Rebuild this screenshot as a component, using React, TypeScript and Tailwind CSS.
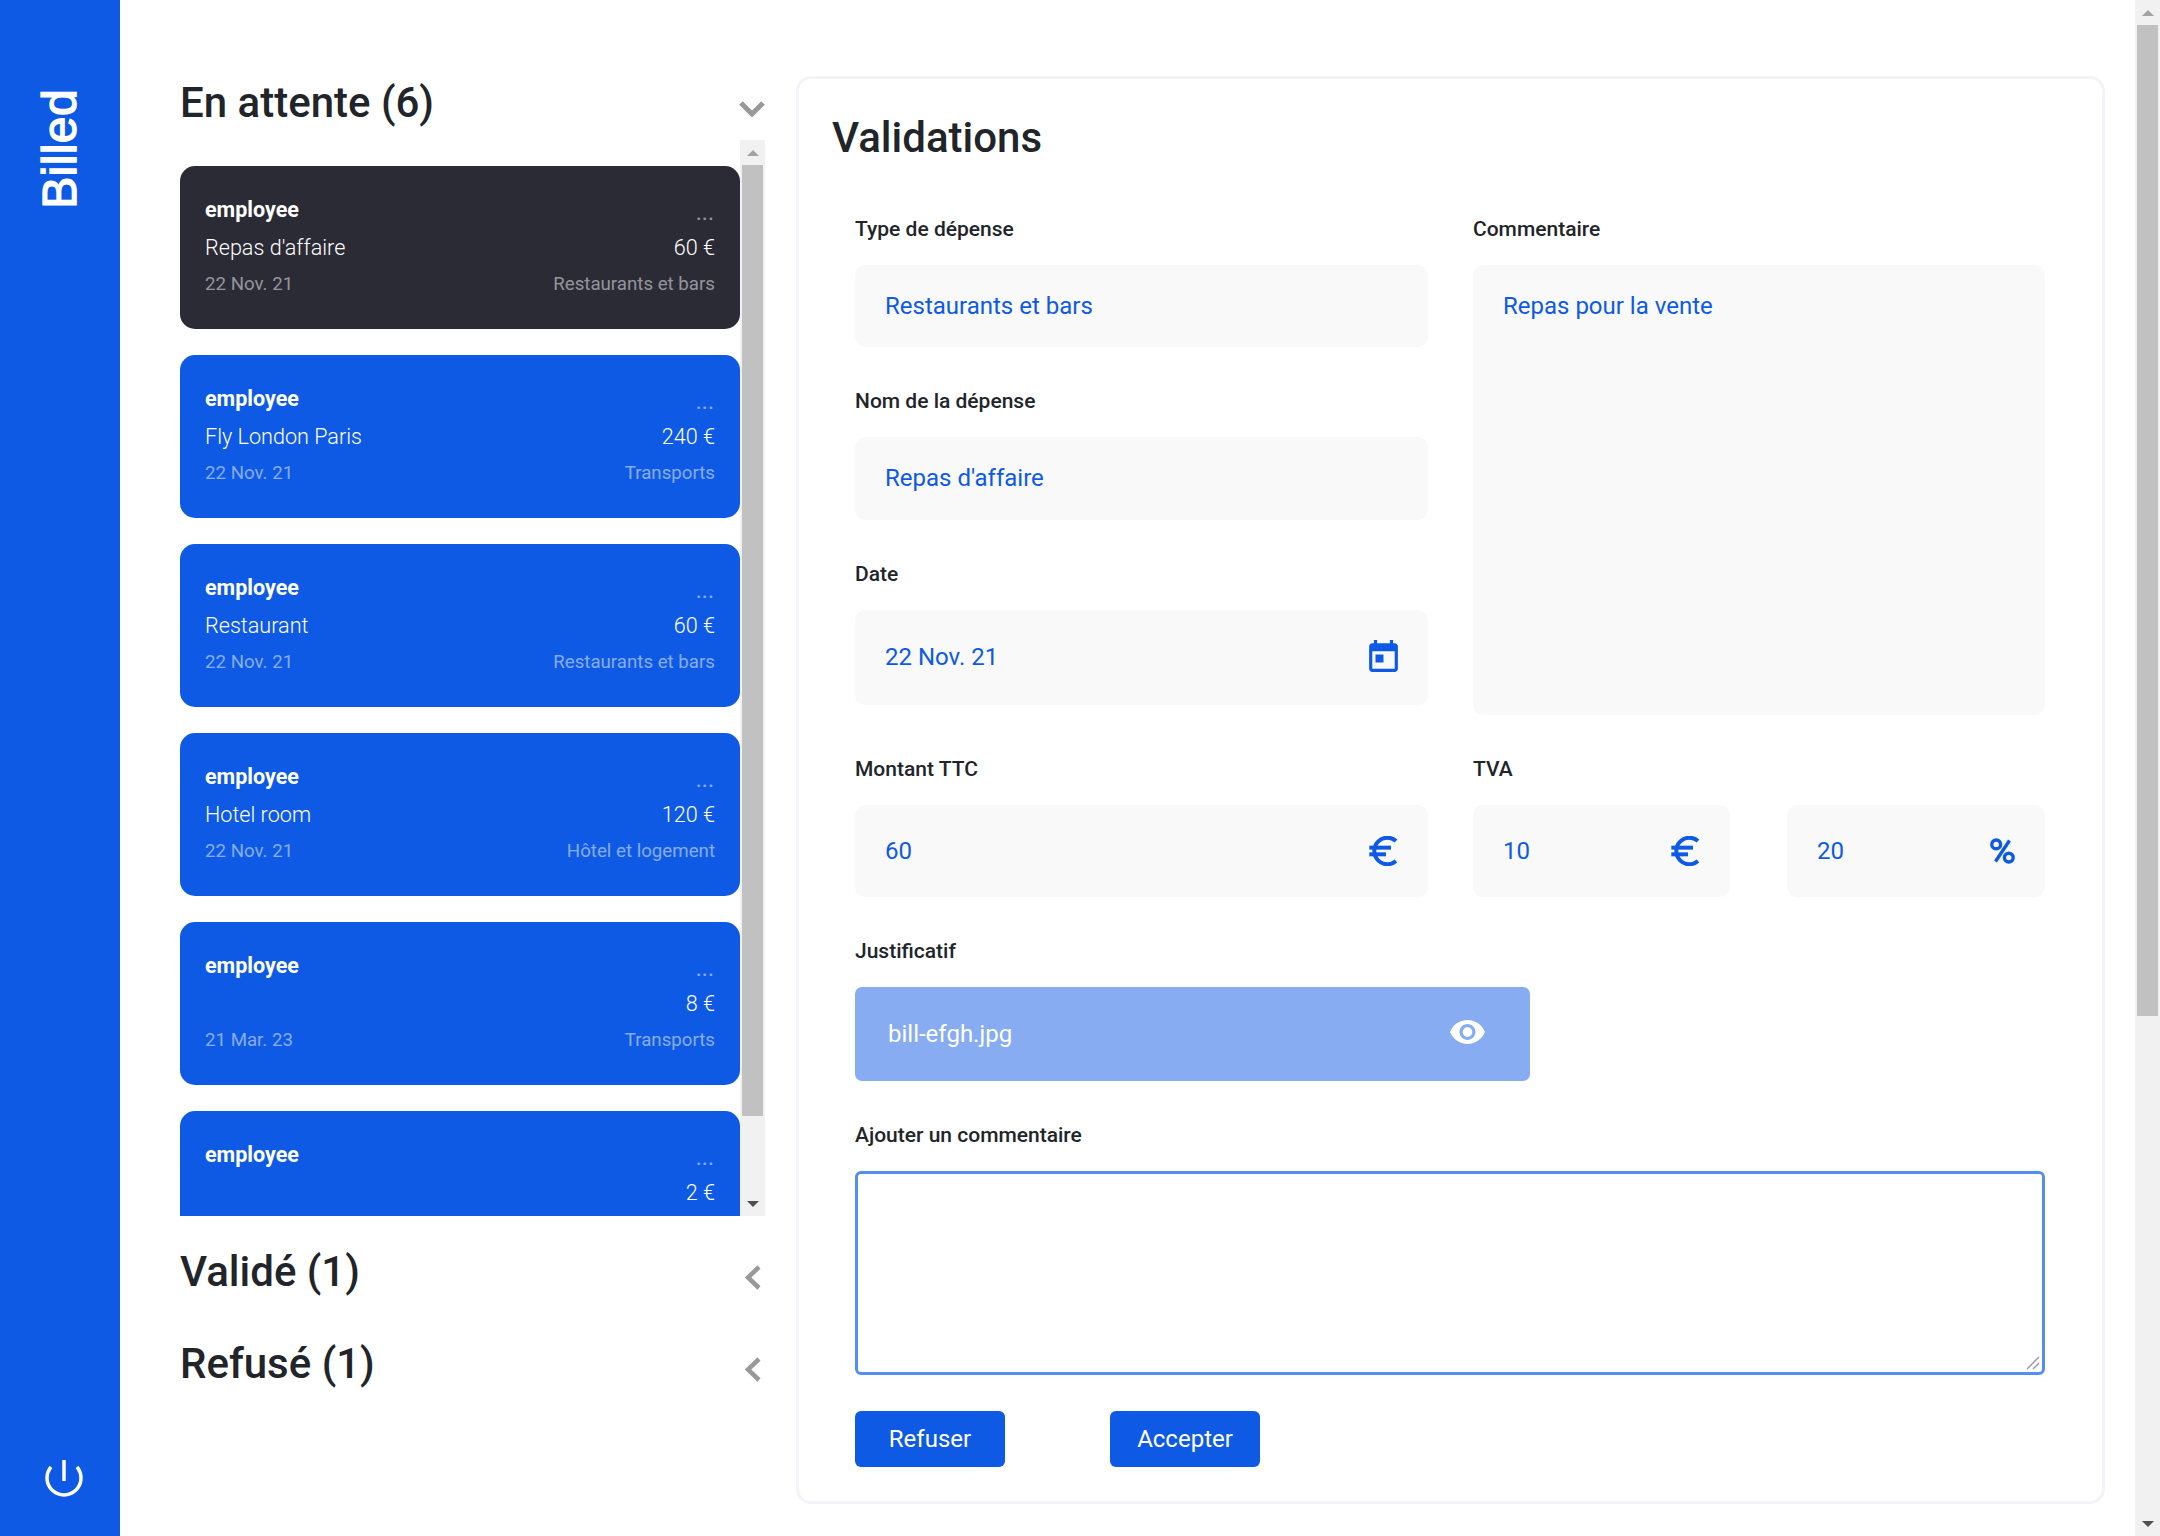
const bills = [
  { name: "Repas d'affaire", amount: "60 €", date: "22 Nov. 21", type: "Restaurants et bars", active: true },
  { name: "Fly London Paris", amount: "240 €", date: "22 Nov. 21", type: "Transports" },
  { name: "Restaurant", amount: "60 €", date: "22 Nov. 21", type: "Restaurants et bars" },
  { name: "Hotel room", amount: "120 €", date: "22 Nov. 21", type: "Hôtel et logement" },
  { name: "", amount: "8 €", date: "21 Mar. 23", type: "Transports" },
  { name: "", amount: "2 €", date: "", type: "" },
];

function BillCard({ bill }: { bill: (typeof bills)[number] }) {
  return (
    <div
      className={`h-[163px] shrink-0 rounded-[15px] px-[25px] pt-[32px] text-white ${
        bill.active ? "bg-[#2a2b35]" : "bg-[#0e5ae5]"
      }`}
    >
      <div className="flex h-[24px] items-center justify-between">
        <span className="text-[21.5px] font-bold">employee</span>
        <span className="mt-[6px] mr-[1px] text-[23px] opacity-50">...</span>
      </div>
      <div className="mt-[14px] flex h-[24px] items-center justify-between text-[21.6px] font-light">
        <span>{bill.name}</span>
        <span>{bill.amount}</span>
      </div>
      <div className="mt-[12px] flex h-[24px] items-center justify-between text-[18.7px] font-[450] text-white/50">
        <span>{bill.date}</span>
        <span>{bill.type}</span>
      </div>
    </div>
  );
}

function ScrollBar({ thumbTop, thumbHeight }: { thumbTop: number; thumbHeight: number }) {
  return (
    <div className="flex w-[25px] shrink-0 flex-col items-center bg-[#f1f1f1]">
      <div className="flex h-[25px] w-full shrink-0 items-center justify-center">
        <div className="h-0 w-0 border-x-[6px] border-b-[6px] border-x-transparent border-b-[#a3a3a3]" />
      </div>
      <div className="w-[21px] bg-[#c1c1c1]" style={{ marginTop: thumbTop, height: thumbHeight }} />
      <div className="mt-auto flex h-[25px] w-full shrink-0 items-center justify-center">
        <div className="h-0 w-0 border-x-[6px] border-t-[6px] border-x-transparent border-t-[#505050]" />
      </div>
    </div>
  );
}

function Chevron({ dir }: { dir: "down" | "left" }) {
  if (dir === "down") {
    return (
      <svg width="26" height="16" viewBox="0 0 26 16" fill="none" stroke="#999999" strokeWidth="5">
        <path d="M2 2l11 11L24 2" />
      </svg>
    );
  }
  return (
    <svg width="17" height="25" viewBox="0 0 17 25" fill="none" stroke="#999999" strokeWidth="4.5">
      <path d="M15 2L4 12.5 15 23" />
    </svg>
  );
}

function Label({ children }: { children: string }) {
  return <div className="mb-[24px] h-[24px] text-[21px] leading-[24px] font-[480] text-[#212529]">{children}</div>;
}

function Field({ value, className, icon }: { value: string; className: string; icon?: React.ReactNode }) {
  return (
    <div className={`flex items-center justify-between rounded-[10px] bg-[#f9f9f9] px-[30px] text-[24px] text-[#0e5ae5] ${className}`}>
      <span>{value}</span>
      {icon}
    </div>
  );
}

const euroIcon = (
  <svg width="29" height="30" viewBox="3 3 17 18" fill="none" stroke="#0e5ae5" strokeWidth="2.4">
    <path d="M3 10h13" />
    <path d="M3 14h10" />
    <path d="M19 6a7.7 7.7 0 0 0-5.2-2A7.9 7.9 0 0 0 6 12c0 4.4 3.5 8 7.8 8 2 0 3.8-.8 5.2-2" />
  </svg>
);

export default function App() {
  return (
    <div className="flex h-[1536px] w-[2160px] overflow-hidden bg-white font-['Roboto',sans-serif] text-[#212529]">
      <aside className="flex w-[120px] shrink-0 flex-col items-center bg-[#0e5ae5] pt-[89px] pb-[38px]">
        <div className="rotate-180 font-['Liberation_Sans',sans-serif] text-[48px] leading-[48px] tracking-[0.4px] text-white [-webkit-text-stroke:1.4px_white] [writing-mode:vertical-rl]">
          Billed
        </div>
        <svg className="mt-auto ml-[8px]" width="38" height="38" viewBox="0 0 38 38" fill="none" stroke="white" strokeWidth="3.5">
          <path d="M6 7a17 17 0 1 0 26 0" />
          <path d="M19 0v21" />
        </svg>
      </aside>

      <section className="ml-[60px] w-[585px] shrink-0 pt-[78px]">
        <div className="flex h-[62px] items-start justify-between">
          <h3 className="text-[42px] leading-[50px] font-[480]">En attente (6)</h3>
          <div className="mt-[23px]">
            <Chevron dir="down" />
          </div>
        </div>
        <div className="flex h-[1076px]">
          <div className="flex w-[560px] flex-col gap-[26px] overflow-hidden pt-[26px]">
            {bills.map((bill, i) => (
              <BillCard key={i} bill={bill} />
            ))}
          </div>
          <ScrollBar thumbTop={0} thumbHeight={951} />
        </div>
        <div className="mt-[31px] flex h-[50px] items-center justify-between">
          <h3 className="text-[42px] leading-[50px] font-[480]">Validé (1)</h3>
          <div className="mt-[10px] mr-[4px]">
            <Chevron dir="left" />
          </div>
        </div>
        <div className="mt-[42px] flex h-[50px] items-center justify-between">
          <h3 className="text-[42px] leading-[50px] font-[480]">Refusé (1)</h3>
          <div className="mt-[10px] mr-[4px]">
            <Chevron dir="left" />
          </div>
        </div>
      </section>

      <main className="mt-[76px] ml-[31px] h-[1428px] w-[1309px] shrink-0 rounded-[15px] border-[3px] border-[#f3f3f9] pt-[34px]">
        <h3 className="ml-[33px] text-[42px] leading-[50px] font-[480]">Validations</h3>
        <div className="mt-[54px] ml-[56px] w-[1190px]">
          <div className="grid grid-cols-[573px_572px] gap-x-[45px]">
            <div>
              <Label>Type de dépense</Label>
              <Field value="Restaurants et bars" className="h-[82px]" />
              <div className="mt-[42px]">
                <Label>Nom de la dépense</Label>
                <Field value="Repas d'affaire" className="h-[83px] pb-[1px]" />
              </div>
              <div className="mt-[42px]">
                <Label>Date</Label>
                <Field
                  value="22 Nov. 21"
                  className="h-[95px] pb-[2px]"
                  icon={
                    <svg className="-translate-y-[1px]" width="29" height="32" viewBox="3 1 18 20" fill="#0e5ae5">
                      <path d="M19 3h-1V1h-2v2H8V1H6v2H5c-1.11 0-1.99.9-1.99 2L3 19c0 1.1.89 2 2 2h14c1.1 0 2-.9 2-2V5c0-1.1-.9-2-2-2zm0 16H5V8h14v11zM7 10h5v5H7z" />
                    </svg>
                  }
                />
              </div>
            </div>
            <div>
              <Label>Commentaire</Label>
              <div className="h-[450px] rounded-[10px] bg-[#f9f9f9] px-[30px] pt-[26px] text-[24px] leading-[30px] text-[#0e5ae5]">
                Repas pour la vente
              </div>
            </div>
          </div>

          <div className="mt-[42px] grid grid-cols-[573px_572px] gap-x-[45px]">
            <div>
              <Label>Montant TTC</Label>
              <Field value="60" className="h-[92px]" icon={euroIcon} />
            </div>
            <div>
              <Label>TVA</Label>
              <div className="grid grid-cols-[257px_258px] gap-x-[57px]">
                <Field value="10" className="h-[92px]" icon={euroIcon} />
                <Field
                  value="20"
                  className="h-[92px]"
                  icon={
                    <svg width="25" height="26" viewBox="0 0 25 26" fill="none" stroke="#0e5ae5" strokeWidth="3.4">
                      <circle cx="6.2" cy="6.4" r="4.4" />
                      <circle cx="18.8" cy="19.6" r="4.4" />
                      <path d="M19.5 2.5L5.5 23.5" />
                    </svg>
                  }
                />
              </div>
            </div>
          </div>

          <div className="mt-[42px]">
            <Label>Justificatif</Label>
            <div className="flex h-[94px] w-[675px] items-center justify-between rounded-[7px] bg-[#87acf2] pr-[45px] pl-[33px] text-[24px] text-white">
              <span>bill-efgh.jpg</span>
              <svg className="-mt-[4px]" width="35" height="24" viewBox="1 4.5 22 15" fill="white">
                <path d="M12 4.5C7 4.5 2.73 7.61 1 12c1.73 4.39 6 7.5 11 7.5s9.27-3.11 11-7.5c-1.73-4.39-6-7.5-11-7.5zM12 17c-2.76 0-5-2.24-5-5s2.24-5 5-5 5 2.24 5 5-2.24 5-5 5zm0-8c-1.66 0-3 1.34-3 3s1.34 3 3 3 3-1.34 3-3-1.34-3-3-3z" />
              </svg>
            </div>
          </div>

          <div className="mt-[42px]">
            <Label>Ajouter un commentaire</Label>
            <div className="relative h-[204px] rounded-[6px] border-[3px] border-[#558df0] bg-white">
              <svg className="absolute right-[2px] bottom-[2px]" width="14" height="14" viewBox="0 0 14 14" stroke="#999999" strokeWidth="1.4">
                <path d="M1 13L13 1M7 13l6-6" />
              </svg>
            </div>
          </div>

          <div className="mt-[36px] flex gap-[105px]">
            <button className="h-[56px] w-[150px] rounded-[6px] bg-[#0e5ae5] text-[24px] text-white">Refuser</button>
            <button className="h-[56px] w-[150px] rounded-[6px] bg-[#0e5ae5] text-[24px] text-white">Accepter</button>
          </div>
        </div>
      </main>

      <div className="ml-auto flex h-full">
        <ScrollBar thumbTop={0} thumbHeight={991} />
      </div>
    </div>
  );
}
